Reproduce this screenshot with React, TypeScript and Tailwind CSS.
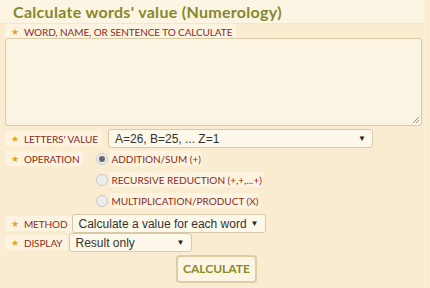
import React from "react";

const labelCls =
  "inline-flex items-center h-[15px] pl-[6px] pr-[4px] bg-[#fcf4e1] rounded-[2px] text-[#8a2c1c] text-[10px] uppercase tracking-[-0.1px] whitespace-nowrap leading-none";

function Star() {
  return <span className="text-[#e3a41d] text-[9px] mr-[5px] leading-none">★</span>;
}

function Label({ text, className = "" }: { text: string; className?: string }) {
  return (
    <span className={`${labelCls} ${className}`}>
      <Star />
      {text}
    </span>
  );
}

function Select({ value, className = "" }: { value: string; className?: string }) {
  return (
    <div
      className={`flex items-center justify-between h-[19px] pl-[6px] pr-[6px] bg-[#fdf8ea] border border-[#d8caa6] rounded-[3px] text-[12px] leading-none text-[#333] font-['Liberation_Sans',Arial,sans-serif] ${className}`}
    >
      <span>{value}</span>
      <span className="text-[8px] text-[#222]">▼</span>
    </div>
  );
}

function Radio({ checked, text }: { checked?: boolean; text: string }) {
  return (
    <div className="flex items-center h-[21px]">
      <span className="w-[12px] h-[12px] rounded-full border border-[#c9c9c9] bg-[#ececec] flex items-center justify-center mr-[2px]">
        {checked && <span className="w-[6px] h-[6px] rounded-full bg-[#666]" />}
      </span>
      <span className="h-[15px] px-[1px] bg-[#fcf4e1] text-[#8a2c1c] text-[10px] leading-none uppercase flex items-center">
        {text}
      </span>
    </div>
  );
}

export default function App() {
  return (
    <div className="w-[430px] h-[288px] bg-[#f9ecd1] overflow-hidden flex font-['Lato','Liberation_Sans',sans-serif]">
      <div className="w-[425px] border-r border-[#fbf2df]">
        {/* Title */}
        <div className="h-[24px] bg-[#fcf5e4] border-b border-[#f5e7c7] pl-[13px] flex items-center">
          <h1 className="text-[16px] font-bold text-[#85882a] tracking-[0.3px] leading-none mt-[1px]">
            Calculate words' value (Numerology)
          </h1>
        </div>

        <div className="pl-[5px] pr-[2px] flex flex-col">
          <div className="flex h-[14px]">
            <Label text="Word, name, or sentence to calculate" className="h-[14px]" />
          </div>

          {/* textarea */}
          <div className="relative h-[88px] bg-[#fcf4e2] border border-[#d9cba9] rounded-[3px]">
            <svg className="absolute right-[1px] bottom-[1px]" width="9" height="9" viewBox="0 0 9 9">
              <path d="M8 2 L2 8 M8 5 L5 8" stroke="#9a927e" strokeWidth="1" />
            </svg>
          </div>

          {/* letters value */}
          <div className="flex items-center h-[19px] mt-[3px] gap-[6px]">
            <Label text="Letters' value" />
            <Select value="A=26, B=25, ... Z=1" className="w-[265px]" />
          </div>

          {/* operation */}
          <div className="flex mt-[3px]">
            <Label text="Operation" />
            <div className="ml-[13px] mt-[-3px]">
              <Radio checked text="Addition/Sum (+)" />
              <Radio text="Recursive reduction (+,+,...+)" />
              <Radio text="Multiplication/product (X)" />
            </div>
          </div>

          {/* method */}
          <div className="flex items-center h-[19px] mt-[3px]">
            <Label text="Method" />
            <Select value="Calculate a value for each word" className="w-[194px]" />
          </div>

          {/* display */}
          <div className="flex items-center h-[19px] gap-[2px]">
            <Label text="Display" />
            <Select value="Result only" className="w-[123px]" />
          </div>

          <div className="flex mt-[3px] pl-[171px]">
            <button className="h-[28px] px-[5px] bg-[#fcf5e3] border-2 border-[#dccda3] rounded-[4px] text-[#8a8a2c] text-[12px] font-bold leading-none">
              CALCULATE
            </button>
          </div>
        </div>
      </div>
    </div>
  );
}
